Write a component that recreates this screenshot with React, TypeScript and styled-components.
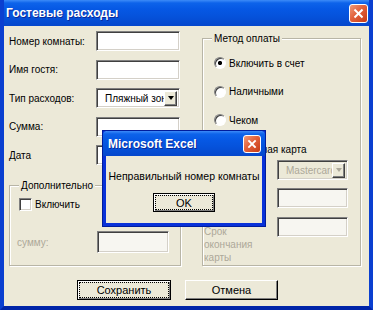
import styled, { createGlobalStyle } from 'styled-components';

const GlobalStyle = createGlobalStyle`
  html, body {
    margin: 0;
    padding: 0;
    background: #ece9d8;
  }
  body {
    font-family: 'Liberation Sans', Arial, sans-serif;
    font-size: 10px;
    color: #000;
  }
`;

const colors = {
  face: '#ece9d8',
  frame: '#0a3fd0',
  frameDark: '#0024a8',
  shadow: '#808080',
  darkShadow: '#404040',
  light: '#ffffff',
  disabledText: '#aca899',
  groupLine: '#b8b5a6',
};

const titleGradient = `linear-gradient(
  to bottom,
  #3d8bf8 0px,
  #0d63ea 3px,
  #0658e4 9px,
  #0553dc 60%,
  #0547cc 100%
)`;

const Window = styled.div`
  position: relative;
  width: 373px;
  height: 310px;
  box-sizing: border-box;
  display: flex;
  flex-direction: column;
  background: ${colors.face};
  border-left: 4px solid ${colors.frame};
  border-right: 4px solid ${colors.frame};
  border-bottom: 4px solid ${colors.frameDark};
  overflow: hidden;
`;

const TitleBar = styled.div<{ $height: number }>`
  height: ${(p) => p.$height}px;
  margin: 0 -4px;
  padding: 0 5px 0 6px;
  flex-shrink: 0;
  display: flex;
  align-items: center;
  justify-content: space-between;
  background: ${titleGradient};
`;

const Title = styled.span<{ $size: number }>`
  font-family: 'Liberation Sans', Arial, sans-serif;
  font-weight: bold;
  font-size: ${(p) => p.$size}px;
  color: #fff;
  text-shadow: 1px 1px 0 #0a2a9a;
  white-space: nowrap;
`;

const CloseButton = styled.div<{ $size: number }>`
  width: ${(p) => p.$size}px;
  height: ${(p) => p.$size}px;
  box-sizing: border-box;
  border: 1px solid #fff;
  border-radius: 3px;
  background: linear-gradient(135deg, #f09a78 0%, #e2613b 45%, #c63a14 100%);
  display: flex;
  align-items: center;
  justify-content: center;
`;

const Body = styled.div`
  flex: 1;
  display: flex;
  flex-direction: column;
  padding: 5px 0 0 5px;
`;

const Columns = styled.div`
  display: flex;
  gap: 21px;
`;

const LeftColumn = styled.div`
  width: 172px;
  display: flex;
  flex-direction: column;
`;

const Fields = styled.div`
  display: flex;
  flex-direction: column;
  gap: 8.5px;
`;

const FieldRow = styled.div`
  display: flex;
  align-items: center;
  height: 20px;
`;

const Label = styled.span<{ $width?: number; $disabled?: boolean }>`
  width: ${(p) => p.$width ?? 87}px;
  flex-shrink: 0;
  white-space: nowrap;
  color: ${(p) => (p.$disabled ? colors.disabledText : '#000')};
`;

const TextBox = styled.div<{ $width?: number; $height?: number; $disabled?: boolean }>`
  width: ${(p) => p.$width ?? 84}px;
  height: ${(p) => p.$height ?? 20}px;
  box-sizing: border-box;
  flex-shrink: 0;
  background: ${(p) => (p.$disabled ? '#f7f6f1' : '#fff')};
  border-style: solid;
  border-width: 1px;
  border-color: ${colors.shadow} ${colors.light} ${colors.light} ${colors.shadow};
  box-shadow: inset 1px 1px 0 ${colors.darkShadow}, inset -1px -1px 0 #d4d0c8;
`;

const Combo = styled(TextBox)`
  display: flex;
  align-items: center;
  justify-content: space-between;
  padding: 2px 2px 2px 8px;
  overflow: hidden;
  color: ${(p) => (p.$disabled ? colors.disabledText : '#000')};
  background: ${(p) => (p.$disabled ? colors.face : '#fff')};
`;

const ComboText = styled.span`
  flex: 1;
  overflow: hidden;
  white-space: nowrap;
`;

const ArrowButton = styled.span<{ $disabled?: boolean }>`
  width: 13px;
  height: 15px;
  box-sizing: border-box;
  flex-shrink: 0;
  background: ${colors.face};
  border-style: solid;
  border-width: 1px;
  border-color: ${colors.light} ${colors.darkShadow} ${colors.darkShadow} ${colors.light};
  box-shadow: inset -1px -1px 0 ${colors.shadow};
  display: flex;
  align-items: center;
  justify-content: center;

  &::before {
    content: '';
    border-left: 3.5px solid transparent;
    border-right: 3.5px solid transparent;
    border-top: 4px solid ${(p) => (p.$disabled ? colors.disabledText : '#000')};
  }
`;

const GroupBox = styled.div<{ $top: number; $height: number; $width: number }>`
  position: relative;
  margin-top: ${(p) => p.$top}px;
  width: ${(p) => p.$width}px;
  height: ${(p) => p.$height}px;
  box-sizing: border-box;
  border: 1px solid ${colors.groupLine};
  box-shadow: inset 1px 1px 0 #fff, 1px 1px 0 #fff;
  display: flex;
  flex-direction: column;
`;

const Caption = styled.span`
  position: absolute;
  top: -7px;
  left: 9px;
  padding: 0 2px;
  line-height: 13px;
  background: ${colors.face};
  white-space: nowrap;
`;

const OptionRow = styled.div<{ $disabled?: boolean }>`
  display: flex;
  align-items: center;
  gap: 3px;
  height: 16px;
  white-space: nowrap;
  color: ${(p) => (p.$disabled ? colors.disabledText : '#000')};
`;

const RadioDot = styled.span<{ $checked?: boolean }>`
  width: 12px;
  height: 12px;
  box-sizing: border-box;
  border-radius: 50%;
  flex-shrink: 0;
  border: 1px solid;
  border-color: ${colors.shadow} #fff #fff ${colors.shadow};
  box-shadow: inset 1px 1px 0 ${colors.darkShadow};
  background: ${(p) =>
    p.$checked ? 'radial-gradient(circle, #000 0 1.8px, #fff 2.4px)' : '#fff'};
`;

const CheckSquare = styled.span`
  width: 13px;
  height: 13px;
  box-sizing: border-box;
  flex-shrink: 0;
  background: #fff;
  border: 1px solid;
  border-color: ${colors.shadow} #fff #fff ${colors.shadow};
  box-shadow: inset 1px 1px 0 ${colors.darkShadow}, inset -1px -1px 0 #d4d0c8;
`;

const ExtraContent = styled.div`
  display: flex;
  flex-direction: column;
  gap: 19px;
  padding: 10px 0 0 9px;
`;

const AmountRow = styled.div`
  display: flex;
  align-items: center;
  margin-left: -2px;
`;

const PaymentOptions = styled.div`
  display: flex;
  flex-direction: column;
  gap: 12.7px;
  padding: 16px 0 0 11px;
`;

const CardGrid = styled.div`
  display: grid;
  grid-template-columns: 73px 71px;
  row-gap: 8px;
  padding: 3px 0 0 1px;
`;

const CardLabel = styled.span`
  color: ${colors.disabledText};
  line-height: 13px;
  padding-top: 8px;
`;

const ButtonRow = styled.div`
  display: flex;
  gap: 14px;
  padding: 14px 0 0 68px;
`;

const Button = styled.div<{ $width: number; $height: number; $focused?: boolean }>`
  width: ${(p) => p.$width}px;
  height: ${(p) => p.$height}px;
  box-sizing: border-box;
  display: flex;
  align-items: center;
  justify-content: center;
  background: ${colors.face};
  border: 1px solid ${(p) => (p.$focused ? '#000' : colors.light)};
  border-right-color: #000;
  border-bottom-color: #000;
  box-shadow: ${(p) =>
    p.$focused
      ? `inset 1px 1px 0 #fff, inset -1px -1px 0 ${colors.shadow}`
      : `inset -1px -1px 0 ${colors.shadow}`};
`;

const FocusText = styled.span<{ $focused?: boolean }>`
  display: flex;
  align-items: center;
  justify-content: center;
  align-self: stretch;
  flex: 1;
  margin: 2px;
  font-size: 11px;
  outline: ${(p) => (p.$focused ? '1px dotted #000' : 'none')};
`;

const Dialog = styled.div`
  position: absolute;
  left: 99px;
  top: 131px;
  width: 162px;
  height: 95px;
  box-sizing: border-box;
  display: flex;
  flex-direction: column;
  background: ${colors.face};
  border: 3px solid #0831d9;
  border-top: none;
  box-shadow: 0 0 0 1px #001c9c;
`;

const DialogTitle = styled(TitleBar)`
  margin: 0 -3px;
  padding: 0 4px 0 5px;
  border-radius: 4px 4px 0 0;
`;

const DialogBody = styled.div`
  flex: 1;
  display: flex;
  flex-direction: column;
  align-items: center;
  padding-top: 14px;
  gap: 11px;
`;

const Message = styled.span`
  white-space: nowrap;
  font-size: 10.5px;
`;

const CloseIcon = ({ size }: { size: number }) => (
  <svg width={size} height={size} viewBox="0 0 10 10">
    <path d="M2 2 L8 8 M8 2 L2 8" stroke="#fff" strokeWidth="1.8" strokeLinecap="square" />
  </svg>
);

const App = () => {
  return (
    <>
      <GlobalStyle />
      <Window>
        <TitleBar $height={26}>
          <Title $size={12}>Гостевые расходы</Title>
          <CloseButton $size={19}>
            <CloseIcon size={11} />
          </CloseButton>
        </TitleBar>
        <Body>
          <Columns>
            <LeftColumn>
              <Fields>
                <FieldRow>
                  <Label>Номер комнаты:</Label>
                  <TextBox />
                </FieldRow>
                <FieldRow>
                  <Label>Имя гостя:</Label>
                  <TextBox />
                </FieldRow>
                <FieldRow>
                  <Label>Тип расходов:</Label>
                  <Combo>
                    <ComboText>Пляжный зонт</ComboText>
                    <ArrowButton />
                  </Combo>
                </FieldRow>
                <FieldRow>
                  <Label>Сумма:</Label>
                  <TextBox />
                </FieldRow>
                <FieldRow>
                  <Label>Дата</Label>
                  <TextBox />
                </FieldRow>
              </Fields>
              <GroupBox $top={20} $height={81} $width={172}>
                <Caption>Дополнительно</Caption>
                <ExtraContent>
                  <OptionRow>
                    <CheckSquare />
                    Включить
                  </OptionRow>
                  <AmountRow>
                    <Label $width={80} $disabled>
                      сумму:
                    </Label>
                    <TextBox $width={72} $height={22} $disabled />
                  </AmountRow>
                </ExtraContent>
              </GroupBox>
            </LeftColumn>
            <GroupBox $top={7} $height={228} $width={159}>
              <Caption>Метод оплаты</Caption>
              <PaymentOptions>
                <OptionRow>
                  <RadioDot $checked />
                  Включить в счет
                </OptionRow>
                <OptionRow>
                  <RadioDot />
                  Наличными
                </OptionRow>
                <OptionRow>
                  <RadioDot />
                  Чеком
                </OptionRow>
                <OptionRow>
                  <RadioDot />
                  Кредитная карта
                </OptionRow>
              </PaymentOptions>
              <CardGrid>
                <span />
                <Combo $width={71} $disabled>
                  <ComboText>Mastercard</ComboText>
                  <ArrowButton $disabled />
                </Combo>
                <CardLabel>Номер карты</CardLabel>
                <TextBox $width={71} $disabled />
                <CardLabel>
                  Срок
                  <br />
                  окончания
                  <br />
                  карты
                </CardLabel>
                <TextBox $width={71} $disabled />
              </CardGrid>
            </GroupBox>
          </Columns>
          <ButtonRow>
            <Button $width={94} $height={20} $focused>
              <FocusText $focused>Сохранить</FocusText>
            </Button>
            <Button $width={93} $height={20}>
              <FocusText>Отмена</FocusText>
            </Button>
          </ButtonRow>
        </Body>
        <Dialog>
          <DialogTitle $height={25}>
            <Title $size={12}>Microsoft Excel</Title>
            <CloseButton $size={18}>
              <CloseIcon size={10} />
            </CloseButton>
          </DialogTitle>
          <DialogBody>
            <Message>Неправильный номер комнаты</Message>
            <Button $width={62} $height={19} $focused>
              <FocusText $focused>OK</FocusText>
            </Button>
          </DialogBody>
        </Dialog>
      </Window>
    </>
  );
};

export default App;
